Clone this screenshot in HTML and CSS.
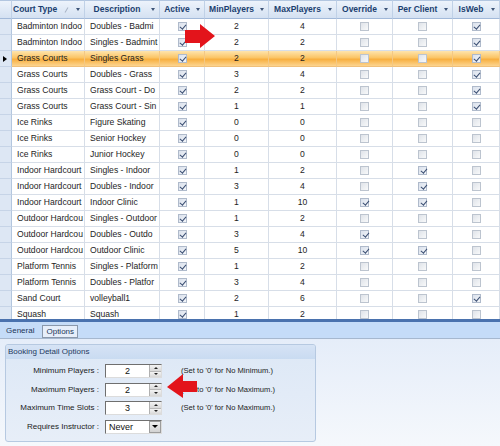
FILE: index.html
```html
<!DOCTYPE html>
<html>
<head>
<meta charset="utf-8">
<link rel="stylesheet" href="styles.css">
</head>
<body>
<div class="app">
  <div class="grid">
    <div class="row head">
      <div class="c rh"></div>
      <div class="c h first"><span class="ht">Court Type</span><span class="sort"></span><span class="dd"></span></div>
      <div class="c h"><span class="ht">Description</span><span class="dd"></span></div>
      <div class="c h"><span class="ht">Active</span><span class="dd"></span></div>
      <div class="c h"><span class="ht">MinPlayers</span><span class="dd"></span></div>
      <div class="c h"><span class="ht">MaxPlayers</span><span class="dd"></span></div>
      <div class="c h"><span class="ht">Override</span><span class="dd"></span></div>
      <div class="c h"><span class="ht">Per Client</span><span class="dd"></span></div>
      <div class="c h"><span class="ht">IsWeb</span><span class="dd"></span></div>
    </div>
    <div class="row"><div class="c rh"></div><div class="c t">Badminton Indoo</div><div class="c t">Doubles - Badmi</div><div class="c k"><i class="cb on"></i></div><div class="c n">2</div><div class="c n">4</div><div class="c k"><i class="cb"></i></div><div class="c k"><i class="cb"></i></div><div class="c k"><i class="cb on"></i></div></div>
    <div class="row"><div class="c rh"></div><div class="c t">Badminton Indoo</div><div class="c t">Singles - Badmint</div><div class="c k"><i class="cb on"></i></div><div class="c n">2</div><div class="c n">2</div><div class="c k"><i class="cb"></i></div><div class="c k"><i class="cb"></i></div><div class="c k"><i class="cb on"></i></div></div>
    <div class="row sel"><div class="c rh"><span class="cur"></span></div><div class="c t">Grass Courts</div><div class="c t">Singles Grass</div><div class="c k"><i class="cb on"></i></div><div class="c n">2</div><div class="c n">2</div><div class="c k"><i class="cb"></i></div><div class="c k"><i class="cb"></i></div><div class="c k"><i class="cb on"></i></div></div>
    <div class="row"><div class="c rh"></div><div class="c t">Grass Courts</div><div class="c t">Doubles - Grass</div><div class="c k"><i class="cb on"></i></div><div class="c n">3</div><div class="c n">4</div><div class="c k"><i class="cb"></i></div><div class="c k"><i class="cb"></i></div><div class="c k"><i class="cb on"></i></div></div>
    <div class="row"><div class="c rh"></div><div class="c t">Grass Courts</div><div class="c t">Grass Court - Do</div><div class="c k"><i class="cb on"></i></div><div class="c n">2</div><div class="c n">2</div><div class="c k"><i class="cb"></i></div><div class="c k"><i class="cb"></i></div><div class="c k"><i class="cb on"></i></div></div>
    <div class="row"><div class="c rh"></div><div class="c t">Grass Courts</div><div class="c t">Grass Court - Sin</div><div class="c k"><i class="cb on"></i></div><div class="c n">1</div><div class="c n">1</div><div class="c k"><i class="cb"></i></div><div class="c k"><i class="cb"></i></div><div class="c k"><i class="cb on"></i></div></div>
    <div class="row"><div class="c rh"></div><div class="c t">Ice Rinks</div><div class="c t">Figure Skating</div><div class="c k"><i class="cb on"></i></div><div class="c n">0</div><div class="c n">0</div><div class="c k"><i class="cb"></i></div><div class="c k"><i class="cb"></i></div><div class="c k"><i class="cb"></i></div></div>
    <div class="row"><div class="c rh"></div><div class="c t">Ice Rinks</div><div class="c t">Senior Hockey</div><div class="c k"><i class="cb on"></i></div><div class="c n">0</div><div class="c n">0</div><div class="c k"><i class="cb"></i></div><div class="c k"><i class="cb"></i></div><div class="c k"><i class="cb"></i></div></div>
    <div class="row"><div class="c rh"></div><div class="c t">Ice Rinks</div><div class="c t">Junior Hockey</div><div class="c k"><i class="cb on"></i></div><div class="c n">0</div><div class="c n">0</div><div class="c k"><i class="cb"></i></div><div class="c k"><i class="cb"></i></div><div class="c k"><i class="cb"></i></div></div>
    <div class="row"><div class="c rh"></div><div class="c t">Indoor Hardcourt</div><div class="c t">Singles - Indoor</div><div class="c k"><i class="cb on"></i></div><div class="c n">1</div><div class="c n">2</div><div class="c k"><i class="cb"></i></div><div class="c k"><i class="cb on"></i></div><div class="c k"><i class="cb"></i></div></div>
    <div class="row"><div class="c rh"></div><div class="c t">Indoor Hardcourt</div><div class="c t">Doubles - Indoor</div><div class="c k"><i class="cb on"></i></div><div class="c n">3</div><div class="c n">4</div><div class="c k"><i class="cb"></i></div><div class="c k"><i class="cb on"></i></div><div class="c k"><i class="cb"></i></div></div>
    <div class="row"><div class="c rh"></div><div class="c t">Indoor Hardcourt</div><div class="c t">Indoor Clinic</div><div class="c k"><i class="cb on"></i></div><div class="c n">1</div><div class="c n">10</div><div class="c k"><i class="cb on"></i></div><div class="c k"><i class="cb on"></i></div><div class="c k"><i class="cb"></i></div></div>
    <div class="row"><div class="c rh"></div><div class="c t">Outdoor Hardcou</div><div class="c t">Singles - Outdoor</div><div class="c k"><i class="cb on"></i></div><div class="c n">1</div><div class="c n">2</div><div class="c k"><i class="cb"></i></div><div class="c k"><i class="cb"></i></div><div class="c k"><i class="cb"></i></div></div>
    <div class="row"><div class="c rh"></div><div class="c t">Outdoor Hardcou</div><div class="c t">Doubles - Outdo</div><div class="c k"><i class="cb on"></i></div><div class="c n">3</div><div class="c n">4</div><div class="c k"><i class="cb on"></i></div><div class="c k"><i class="cb"></i></div><div class="c k"><i class="cb"></i></div></div>
    <div class="row"><div class="c rh"></div><div class="c t">Outdoor Hardcou</div><div class="c t">Outdoor Clinic</div><div class="c k"><i class="cb on"></i></div><div class="c n">5</div><div class="c n">10</div><div class="c k"><i class="cb on"></i></div><div class="c k"><i class="cb on"></i></div><div class="c k"><i class="cb"></i></div></div>
    <div class="row"><div class="c rh"></div><div class="c t">Platform Tennis</div><div class="c t">Singles - Platform</div><div class="c k"><i class="cb on"></i></div><div class="c n">1</div><div class="c n">2</div><div class="c k"><i class="cb"></i></div><div class="c k"><i class="cb"></i></div><div class="c k"><i class="cb"></i></div></div>
    <div class="row"><div class="c rh"></div><div class="c t">Platform Tennis</div><div class="c t">Doubles - Platfor</div><div class="c k"><i class="cb on"></i></div><div class="c n">3</div><div class="c n">4</div><div class="c k"><i class="cb"></i></div><div class="c k"><i class="cb"></i></div><div class="c k"><i class="cb"></i></div></div>
    <div class="row"><div class="c rh"></div><div class="c t">Sand Court</div><div class="c t">volleyball1</div><div class="c k"><i class="cb on"></i></div><div class="c n">2</div><div class="c n">6</div><div class="c k"><i class="cb"></i></div><div class="c k"><i class="cb"></i></div><div class="c k"><i class="cb on"></i></div></div>
    <div class="row"><div class="c rh"></div><div class="c t">Squash</div><div class="c t">Squash</div><div class="c k"><i class="cb on"></i></div><div class="c n">1</div><div class="c n">2</div><div class="c k"><i class="cb"></i></div><div class="c k"><i class="cb"></i></div><div class="c k"><i class="cb"></i></div></div>
  </div>

  <div class="tabs">
    <span class="tab">General</span>
    <span class="tab active">Options</span>
  </div>

  <div class="panel">
    <div class="group">
      <div class="group-title">Booking Detail Options</div>
      <div class="form">
        <span class="lbl">Minimum Players :</span>
        <div class="box"><span class="val">2</span><span class="spinb"><span class="up"></span><span class="dn"></span></span></div>
        <span class="hint">(Set to '0' for No Minimum.)</span>

        <span class="lbl">Maximum Players :</span>
        <div class="box"><span class="val">2</span><span class="spinb"><span class="up"></span><span class="dn"></span></span></div>
        <span class="hint">(Set to '0' for No Maximum.)</span>

        <span class="lbl">Maximum Time Slots :</span>
        <div class="box"><span class="val">3</span><span class="spinb"><span class="up"></span><span class="dn"></span></span></div>
        <span class="hint">(Set to '0' for No Maximum.)</span>

        <span class="lbl">Requires Instructor :</span>
        <div class="box"><span class="val left">Never</span><span class="ddbtn"></span></div>
        <span class="hint"></span>
      </div>
    </div>
  </div>

  <svg class="arrow arrow-r" width="34" height="28" viewBox="0 0 34 28"><polygon points="2,8 17,8 17,2 32,14 17,26 17,21 2,21" fill="#e3141b"/></svg>
  <svg class="arrow arrow-l" width="34" height="28" viewBox="0 0 34 28"><polygon points="2,15 18,2 18,9 32,9 32,20 18,20 18,26" fill="#e3141b"/></svg>
</div>
</body>
</html>
```

FILE: styles.css
```css
* { box-sizing: border-box; }
body {
  margin: 0;
  width: 500px;
  height: 446px;
  overflow: hidden;
  background: #fff;
  font-family: "Liberation Sans", Arial, sans-serif;
}
.app {
  position: relative;
  width: 500px;
  height: 446px;
  overflow: hidden;
}
.grid {
  height: 319px;
  overflow: hidden;
  background: #fff;
}
.row {
  display: grid;
  grid-template-columns: 12px 73px 75px 45px 64px 68px 56px 60px 47px;
  height: 16px;
}
.c {
  border-right: 1px solid #d7dee8;
  border-bottom: 1px solid #d7dee8;
  overflow: hidden;
  white-space: nowrap;
  font-size: 8.6px;
  line-height: 15px;
  color: #1e1e1e;
}
.c.t { padding-left: 5px; }
.c.n { text-align: center; }
.c.k { display: flex; align-items: center; justify-content: center; }
.c.rh {
  background: #dde7f4;
  border-right: 1px solid #b3c6de;
  border-bottom: 1px solid #c6d4e7;
  display: flex;
  align-items: center;
  padding-left: 3px;
}
.cur {
  width: 0;
  height: 0;
  border-left: 4px solid #000;
  border-top: 3.5px solid transparent;
  border-bottom: 3.5px solid transparent;
}

/* header */
.row.head { height: 19px; }
.row.head .c {
  background: linear-gradient(#edf3fb, #d4e1f2);
  border-top: 1px solid #b2c6e0;
  border-bottom: 1px solid #a2b9d9;
  border-right: 1px solid #c0d1e7;
  line-height: 17px;
}
.c.h {
  display: flex;
  align-items: center;
  font-size: 8.5px;
  font-weight: bold;
  color: #1b3f70;
}
.ht { flex: 1; text-align: center; overflow: hidden; }
.c.h.first .ht { text-align: left; padding-left: 1px; }
.sort {
  width: 1px;
  height: 6px;
  background: #a9b5c6;
  transform: rotate(30deg);
  margin-right: 7px;
}
.dd {
  width: 0;
  height: 0;
  border-left: 2px solid transparent;
  border-right: 2px solid transparent;
  border-top: 3px solid #3d5478;
  margin-right: 4px;
  margin-left: 2px;
}

/* selected row */
.row.sel .c:not(.rh) {
  background: linear-gradient(#fee4ad, #fbc565 45%, #f8af3f 55%, #fcd591);
  border-right-color: #f3c885;
  border-bottom-color: #f0c07a;
}

/* checkboxes */
.cb {
  position: relative;
  display: block;
  width: 9px;
  height: 9px;
  border: 1px solid #bcc4cf;
  background: linear-gradient(135deg, #dfe3e9, #f8f9fa);
}
.cb.on { background: linear-gradient(135deg, #dae1ec, #f3f6fa); border-color: #afbacb; }
.cb.on::after {
  content: "";
  position: absolute;
  left: 2.5px;
  top: 0;
  width: 2.5px;
  height: 5px;
  border: solid #3a4e72;
  border-width: 0 1.3px 1.3px 0;
  transform: rotate(40deg);
}

/* tabs */
.tabs {
  height: 20px;
  border-top: 3px solid #4a72ae;
  border-bottom: 1px solid #a6b8cf;
  background: #c5dcf8;
  display: flex;
  align-items: center;
  padding-left: 6px;
  font-size: 8px;
  color: #1c3557;
}
.tab { line-height: 11px; }
.tab.active {
  margin-left: 8px;
  margin-top: 3px;
  height: 13px;
  padding: 0 3px;
  border: 1px solid #8a98ab;
  background: #e6eefa;
}

/* panel */
.panel {
  height: 107px;
  padding: 5px 0 0 5px;
  background: linear-gradient(#e5edf9, #f5f8fc);
}
.group {
  width: 311px;
  height: 98px;
  border: 1px solid #b6c9e1;
  border-radius: 3px;
  background: linear-gradient(#dde8f6, #e7eef8);
  overflow: hidden;
}
.group-title {
  height: 14px;
  line-height: 13px;
  padding-left: 2px;
  font-size: 8px;
  color: #1e3a5f;
  background: linear-gradient(#d6e3f5, #c9dbf1);
}
.form {
  display: grid;
  grid-template-columns: 93px 57px 1fr;
  grid-auto-rows: 14px;
  column-gap: 6px;
  row-gap: 4.5px;
  padding-top: 5px;
}
.lbl {
  text-align: right;
  font-size: 8px;
  line-height: 14px;
  color: #1b1b1b;
  white-space: nowrap;
}
.hint {
  padding-left: 13px;
  font-size: 7.6px;
  line-height: 14px;
  color: #1b1b1b;
  white-space: nowrap;
}
.box {
  display: flex;
  height: 14px;
  border: 1px solid;
  border-color: #6f6f6f #dcdcdc #dcdcdc #6f6f6f;
  background: #fff;
}
.val {
  flex: 1;
  text-align: center;
  font-size: 9px;
  line-height: 12px;
  color: #111;
}
.val.left { text-align: left; padding-left: 3px; }
.spinb {
  width: 12px;
  display: flex;
  flex-direction: column;
  border-left: 1px solid #b0b0b0;
}
.spinb span {
  flex: 1;
  display: flex;
  align-items: center;
  justify-content: center;
  background: linear-gradient(#f3f3f3, #d8d8d8);
}
.spinb .up { border-bottom: 1px solid #b8b8b8; }
.spinb .up::after {
  content: "";
  border-left: 2px solid transparent;
  border-right: 2px solid transparent;
  border-bottom: 2px solid #222;
}
.spinb .dn::after {
  content: "";
  border-left: 2px solid transparent;
  border-right: 2px solid transparent;
  border-top: 2px solid #222;
}
.ddbtn {
  width: 12px;
  display: flex;
  align-items: center;
  justify-content: center;
  background: linear-gradient(#eeeeee, #d2d2d2);
  border: 1px solid #9c9c9c;
}
.ddbtn::after {
  content: "";
  border-left: 3px solid transparent;
  border-right: 3px solid transparent;
  border-top: 3px solid #000;
}

/* annotation arrows */
.arrow { position: absolute; }
.arrow-r { left: 183px; top: 22px; }
.arrow-l { left: 165px; top: 372px; }
```
